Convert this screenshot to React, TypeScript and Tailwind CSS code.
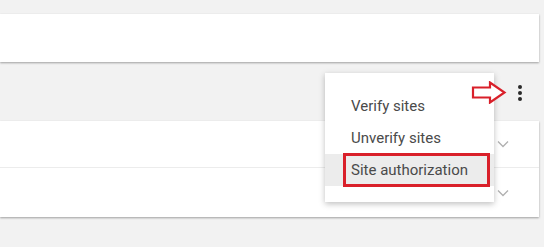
import React from "react";

function Chevron() {
  return (
    <svg width="12" height="8" viewBox="0 0 12 8" className="block">
      <path d="M1 1.5 L6 6.5 L11 1.5" fill="none" stroke="#b0b0b0" strokeWidth="1.3" />
    </svg>
  );
}

export default function App() {
  return (
    <div
      className="relative w-[544px] h-[247px] bg-[#f2f2f2] overflow-hidden pt-[14px]"
      style={{ fontFamily: "Roboto, 'Liberation Sans', sans-serif" }}
    >
      <div className="w-[539px] h-[48px] bg-white shadow-[0_1px_2px_rgba(0,0,0,0.35)]" />
      <div className="h-[59px] flex items-start justify-end pr-[22px] pt-[23px]">
        <div className="flex flex-col items-center gap-[2px]">
          <span className="w-[4px] h-[4px] rounded-full bg-[#2a2a2a]" />
          <span className="w-[4px] h-[4px] rounded-full bg-[#2a2a2a]" />
          <span className="w-[4px] h-[4px] rounded-full bg-[#2a2a2a]" />
        </div>
      </div>
      <div className="w-[539px] h-[96px] bg-white shadow-[0_1px_2px_rgba(0,0,0,0.35)] flex flex-col">
        <div className="h-[47px] border-b border-[#ececec] flex items-center justify-end pr-[30px]">
          <Chevron />
        </div>
        <div className="flex-1 flex items-center justify-end pr-[30px]">
          <Chevron />
        </div>
      </div>

      {/* menu */}
      <div className="absolute left-[325px] top-[73px] w-[169px] h-[129px] bg-white shadow-[0_2px_6px_rgba(0,0,0,0.25)] pt-[17px] text-[15px] text-[#4a4a4a]">
        <div className="h-[32px] flex items-center pl-[26px]">Verify sites</div>
        <div className="h-[32px] flex items-center pl-[26px]">Unverify sites</div>
        <div className="h-[32px] bg-[#ececec] flex items-center pl-[18px]">
          <div className="h-[34px] w-[147px] border-[3px] border-[#d9202a] flex items-center pl-[5px]">
            Site authorization
          </div>
        </div>
      </div>

      {/* arrow */}
      <svg
        className="absolute left-[471px] top-[81px]"
        width="36"
        height="23"
        viewBox="0 0 36 23"
      >
        <path
          d="M2 6.5 H19 V1.5 L33.5 11.5 L19 21.5 V16.5 H2 Z"
          fill="white"
          stroke="#d9202a"
          strokeWidth="2.2"
          strokeLinejoin="miter"
        />
      </svg>
    </div>
  );
}
